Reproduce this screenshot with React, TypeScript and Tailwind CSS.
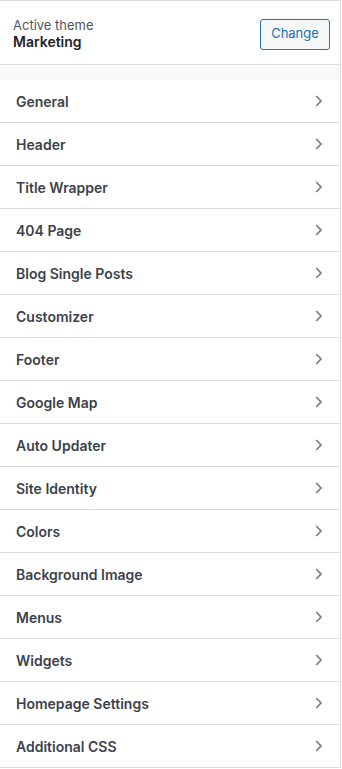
import React from "react";

const items = [
  "General",
  "Header",
  "Title Wrapper",
  "404 Page",
  "Blog Single Posts",
  "Customizer",
  "Footer",
  "Google Map",
  "Auto Updater",
  "Site Identity",
  "Colors",
  "Background Image",
  "Menus",
  "Widgets",
  "Homepage Settings",
  "Additional CSS",
];

function Chevron() {
  return (
    <svg width="10" height="14" viewBox="0 0 10 14" className="shrink-0">
      <path d="M2.2 2 L7 7 L2.2 12" fill="none" stroke="#7c8086" strokeWidth="1.8" />
    </svg>
  );
}

export default function App() {
  return (
    <div
      className="w-[342px] h-[769px] bg-white"
      style={{ fontFamily: "Inter, 'Noto Sans', sans-serif" }}
    >
      <div className="w-[341px] border-t border-r border-[#dcdcde] bg-white">
        <div className="h-[64px] flex items-center justify-between pl-[13px] pr-[10px] border-b border-[#dcdcde]">
          <div className="flex flex-col">
            <span className="text-[13px] leading-[18px] text-[#50575e]">Active theme</span>
            <span className="text-[14px] leading-[16px] font-semibold text-[#1d2327]">Marketing</span>
          </div>
          <button className="mt-[3px] h-[31px] w-[70px] rounded-[3px] border border-[#2271b1] bg-[#f6f7f7] text-[13px] text-[#2271b1] flex items-center justify-center">
            Change
          </button>
        </div>
        <div className="h-[15px] bg-[#f9f9f9]" />
        {items.map((it) => (
          <div
            key={it}
            className="h-[43px] flex items-center justify-between pl-[16px] pr-[16px] border-b border-[#dcdcde]"
          >
            <span className="text-[14px] font-semibold text-[#3c434a]">{it}</span>
            <Chevron />
          </div>
        ))}
      </div>
    </div>
  );
}
